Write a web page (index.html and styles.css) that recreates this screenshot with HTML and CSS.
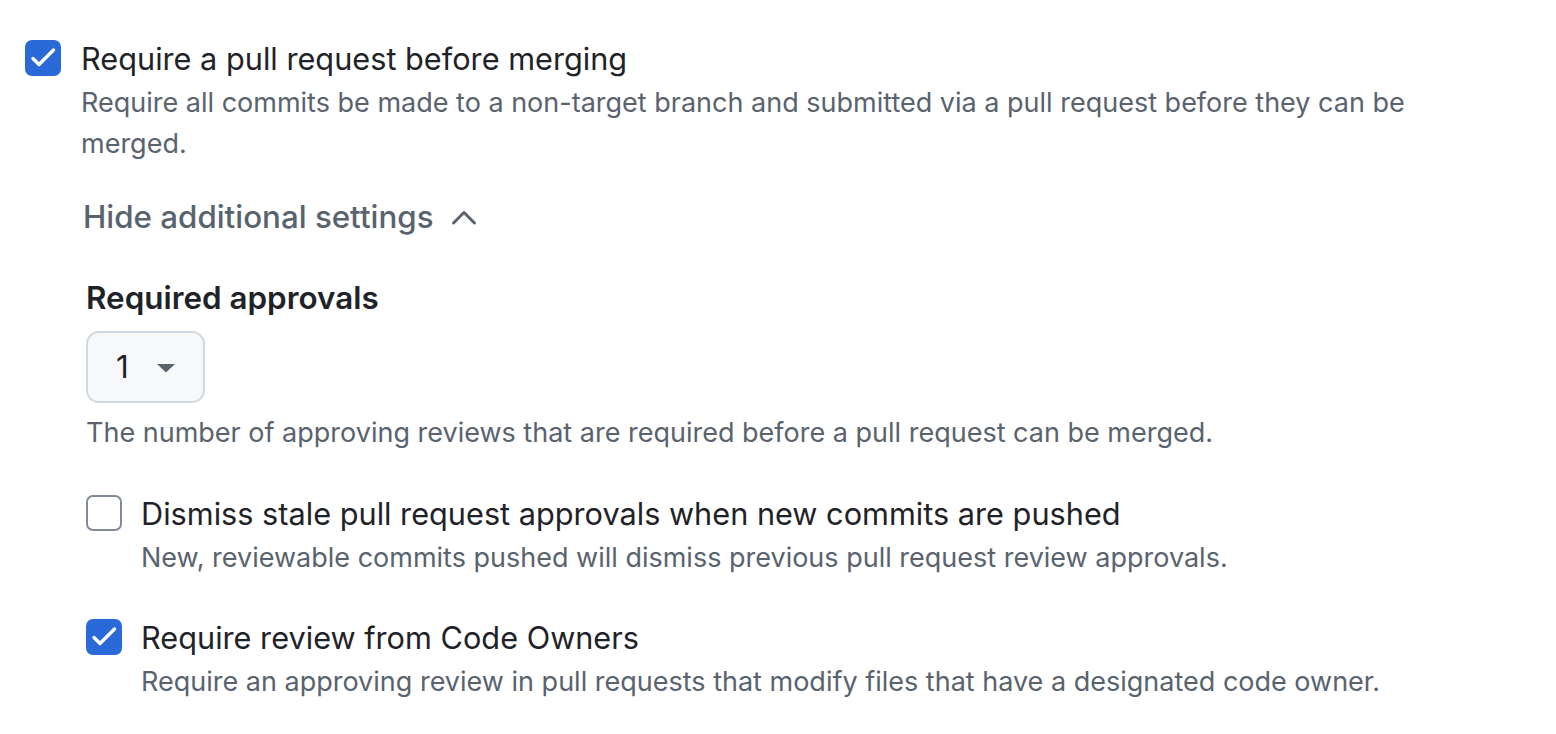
FILE: index.html
```html
<!DOCTYPE html>
<html lang="en">
<head>
<meta charset="utf-8">
<title>Branch protection</title>
<link rel="stylesheet" href="styles.css">
</head>
<body>
<div class="rules">
  <div class="rule">
    <span class="checkbox checked">
      <svg viewBox="0 0 36 36" width="36" height="36"><polyline points="8,18.5 14,24.5 28.5,10" fill="none" stroke="#fff" stroke-width="3.4" stroke-linecap="round" stroke-linejoin="round"/></svg>
    </span>
    <div class="rule-body">
      <div class="rule-title">Require a pull request before merging</div>
      <div class="rule-desc">Require all commits be made to a non-target branch and submitted via a pull request before they can be merged.</div>

      <div class="settings">
        <div class="toggle">
          <span>Hide additional settings</span>
          <svg class="chevron" viewBox="0 0 26 18" width="26" height="18"><polyline points="2.5,15 13,4.5 23.5,15" fill="none" stroke="#59636e" stroke-width="3" stroke-linecap="round" stroke-linejoin="round"/></svg>
        </div>

        <div class="field">
          <div class="field-label">Required approvals</div>
          <button class="select" type="button">
            <span class="select-value">1</span>
            <svg class="caret" viewBox="0 0 18 10" width="18" height="10"><polygon points="0,1 18,1 9,9.5" fill="#59636e"/></svg>
          </button>
          <div class="field-note">The number of approving reviews that are required before a pull request can be merged.</div>
        </div>

        <div class="rule sub">
          <span class="checkbox"></span>
          <div class="rule-body">
            <div class="rule-title">Dismiss stale pull request approvals when new commits are pushed</div>
            <div class="rule-desc">New, reviewable commits pushed will dismiss previous pull request review approvals.</div>
          </div>
        </div>

        <div class="rule sub">
          <span class="checkbox checked">
            <svg viewBox="0 0 36 36" width="36" height="36"><polyline points="8,18.5 14,24.5 28.5,10" fill="none" stroke="#fff" stroke-width="3.4" stroke-linecap="round" stroke-linejoin="round"/></svg>
          </span>
          <div class="rule-body">
            <div class="rule-title">Require review from Code Owners</div>
            <div class="rule-desc">Require an approving review in pull requests that modify files that have a designated code owner.</div>
          </div>
        </div>
      </div>
    </div>
  </div>
</div>
</body>
</html>
```
FILE: styles.css
```css
* { box-sizing: border-box; }

html, body {
  margin: 0;
  background: #ffffff;
}

body {
  font-family: Inter, "Noto Sans", sans-serif;
  color: #1f2328;
}

.rules {
  padding: 36px 0 0 25px;
}

.rule {
  display: flex;
  align-items: flex-start;
  gap: 20px;
}

.checkbox {
  flex: none;
  width: 36px;
  height: 36px;
  margin-top: 4px;
  border-radius: 7px;
  border: 2px solid #818b98;
  background: #ffffff;
  display: flex;
}

.checkbox.checked {
  border: none;
  background: #2a6ad8;
}

.checkbox svg {
  display: block;
}

.rule-body {
  min-width: 0;
}

.rule-title {
  font-size: 30.7px;
  line-height: 45px;
  color: #1f2328;
}

.rule-desc {
  font-size: 27px;
  line-height: 40.5px;
  color: #59636e;
  max-width: 1340px;
  margin-top: 2px;
}

.settings {
  padding-top: 31px;
  padding-left: 5px;
}

.toggle {
  display: flex;
  align-items: center;
  gap: 17px;
  font-size: 31.3px;
  font-weight: 500;
  line-height: 45px;
  color: #59636e;
  margin-left: -3px;
}

.chevron {
  display: block;
  margin-top: -1px;
}

.field {
  padding-top: 36px;
}

.field-label {
  font-size: 31.4px;
  font-weight: 600;
  line-height: 45px;
  color: #1f2328;
}

.select {
  margin-top: 10px;
  width: 119px;
  height: 72px;
  display: flex;
  align-items: center;
  gap: 28px;
  padding: 0 0 0 28px;
  background: #f6f8fa;
  border: 2px solid #d1d9e0;
  border-radius: 13px;
  font-family: inherit;
  font-size: 31.5px;
  color: #1f2328;
}

.select-value {
  line-height: 1;
}

.caret {
  display: block;
  margin-top: 2px;
}

.field-note {
  margin-top: 10px;
  font-size: 27px;
  line-height: 40.5px;
  color: #59636e;
}

.rule.sub {
  margin-top: 37px;
  gap: 19px;
}
```
